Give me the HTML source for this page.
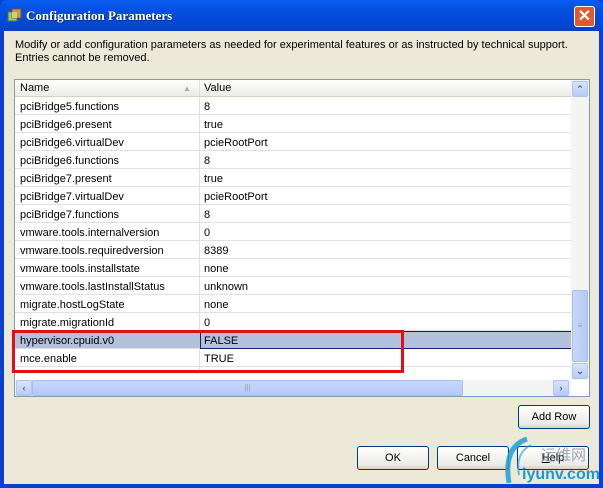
<!DOCTYPE html>
<html><head><meta charset="utf-8"><style>
*{margin:0;padding:0;box-sizing:border-box}
body{width:603px;height:488px;overflow:hidden;background:#0A3FD0;font-family:Tahoma,"Liberation Sans",sans-serif;font-size:11px;color:#000;position:relative}
.title{position:absolute;left:0;top:0;width:603px;height:31px;background:linear-gradient(#0A5EF0,#0550E0 30%,#0346D6 80%,#0A3FC0);border-radius:7px 7px 0 0}
.title .t{position:absolute;left:26px;top:8px;color:#fff;font-family:"Liberation Serif",serif;font-weight:bold;font-size:13px;text-shadow:1px 1px #0a2a80}
.ico{position:absolute;left:7px;top:8px;width:15px;height:15px}
.close{position:absolute;left:574px;top:6px;width:21px;height:21px;background:#E05A30;border:1px solid #fff;border-radius:3px;color:#fff;font-weight:bold;font-size:16px;text-align:center;line-height:19px;font-family:"Liberation Sans",sans-serif}
.body{position:absolute;left:4px;top:31px;width:595px;height:453px;background:#ECE9D8}
.desc{position:absolute;left:15px;top:39px;line-height:13px;width:580px}
.grid{position:absolute;left:14px;top:79px;width:576px;height:318px;border:1px solid #7F9DB9;background:#fff}
.hdr{position:absolute;left:0;top:0;width:556px;height:17px;background:linear-gradient(#fff,#ECEBE6);border-bottom:1px solid #D6D2C2}
.hdr div{position:absolute;top:2px}
.row{position:absolute;left:0;width:556px;height:18px;border-bottom:1px solid #E0DFE3}
.row span{position:absolute;top:4px}
.c1{left:5px}.c2{left:189px}
.sep{position:absolute;left:184px;top:0;width:1px;height:290px;background:#E0DFE3}
.vs{position:absolute;left:556px;top:0;width:18px;height:300px;background:#F4F4F0}
.btnsb{position:absolute;width:16px;height:16px;background:linear-gradient(#D8E4FB,#B8CCF4);border:1px solid #B0C4EE;border-radius:2px;color:#4D6185;font-size:9px;text-align:center;line-height:14px;font-weight:bold}
.hs{position:absolute;left:0;top:300px;width:556px;height:16px;background:#F4F4F0}
.btn{position:absolute;height:24px;border:1px solid #003C74;border-radius:3px;background:linear-gradient(#fff,#ECEBE6 80%,#D6D0C5);text-align:center;line-height:22px}
.red{position:absolute;left:12px;top:330px;width:392px;height:43px;border:3px solid #E0101A}
</style></head><body>
<div class="title">
<svg class="ico" viewBox="0 0 15 15"><rect x="1" y="4" width="9" height="9" fill="#9C6" stroke="#573" /><rect x="5" y="1" width="9" height="9" fill="#E9A030" stroke="#853" opacity=".9"/><rect x="5" y="4" width="5" height="6" fill="#CC8"/></svg>
<div class="t">Configuration Parameters</div>
<div class="close">✕</div>
</div>
<div class="body"></div>
<div class="desc">Modify or add configuration parameters as needed for experimental features or as instructed by technical support.<br>Entries cannot be removed.</div>
<div class="grid">
<div class="hdr"><div style="left:5px">Name</div><div style="left:168px;color:#aaa;font-size:8px;top:4px">▲</div><div style="left:184px;top:0;width:1px;height:17px;background:#ccc"></div><div style="left:189px">Value</div></div>
<div class="sep"></div>
<div class="row" style="top:17px"><span class="c1">pciBridge5.functions</span><span class="c2">8</span></div>
<div class="row" style="top:35px"><span class="c1">pciBridge6.present</span><span class="c2">true</span></div>
<div class="row" style="top:53px"><span class="c1">pciBridge6.virtualDev</span><span class="c2">pcieRootPort</span></div>
<div class="row" style="top:71px"><span class="c1">pciBridge6.functions</span><span class="c2">8</span></div>
<div class="row" style="top:89px"><span class="c1">pciBridge7.present</span><span class="c2">true</span></div>
<div class="row" style="top:107px"><span class="c1">pciBridge7.virtualDev</span><span class="c2">pcieRootPort</span></div>
<div class="row" style="top:125px"><span class="c1">pciBridge7.functions</span><span class="c2">8</span></div>
<div class="row" style="top:143px"><span class="c1">vmware.tools.internalversion</span><span class="c2">0</span></div>
<div class="row" style="top:161px"><span class="c1">vmware.tools.requiredversion</span><span class="c2">8389</span></div>
<div class="row" style="top:179px"><span class="c1">vmware.tools.installstate</span><span class="c2">none</span></div>
<div class="row" style="top:197px"><span class="c1">vmware.tools.lastInstallStatus</span><span class="c2">unknown</span></div>
<div class="row" style="top:215px"><span class="c1">migrate.hostLogState</span><span class="c2">none</span></div>
<div class="row" style="top:233px"><span class="c1">migrate.migrationId</span><span class="c2">0</span></div>
<div class="row" style="top:251px;background:#B3C1DD"><span class="c1">hypervisor.cpuid.v0</span><div style="position:absolute;left:185px;top:0;width:371px;height:18px;border:1px solid #0A246A;border-right:none"></div><span class="c2">FALSE</span></div>
<div class="row" style="top:269px"><span class="c1">mce.enable</span><span class="c2">TRUE</span></div>
<div class="vs">
<div class="btnsb" style="left:1px;top:1px">⌃</div>
<div style="position:absolute;left:1px;top:210px;width:16px;height:72px;background:linear-gradient(90deg,#C8D8FB,#B4CAF6);border:1px solid #A8BEEC;border-radius:2px;color:#8aa;text-align:center;line-height:70px;font-size:8px">≡</div>
<div class="btnsb" style="left:1px;top:283px">⌄</div>
</div>
<div class="hs">
<div class="btnsb" style="left:1px;top:0">‹</div>
<div style="position:absolute;left:17px;top:0;width:431px;height:16px;background:linear-gradient(#C8D8FB,#B4CAF6);border:1px solid #A8BEEC;border-radius:2px;color:#8aa;text-align:center;line-height:14px;font-size:8px">|||</div>
<div class="btnsb" style="left:538px;top:0">›</div>
</div>
</div>
<div class="red"></div>
<div class="btn" style="left:518px;top:405px;width:72px">Add Row</div>
<div class="btn" style="left:357px;top:446px;width:72px">OK</div>
<div class="btn" style="left:437px;top:446px;width:72px">Cancel</div>
<div class="btn" style="left:517px;top:446px;width:72px"><u>H</u>elp</div>
<svg style="position:absolute;left:495px;top:435px" width="108" height="53"><path d="M32 4 Q8 12 14 48" stroke="#1aa0d8" stroke-width="5" fill="none" opacity=".85"/><path d="M36 10 Q20 18 24 40" stroke="#1aa0d8" stroke-width="2" fill="none" opacity=".6"/></svg>
<div style="position:absolute;left:541px;top:444px;color:#7a8aa0;font-size:15px;font-family:'Noto Sans CJK SC',sans-serif;opacity:.75">运维网</div>
<div style="position:absolute;left:522px;top:466px;color:#1a9ad0;font-size:16px;font-weight:bold;font-family:'Liberation Sans',sans-serif">iyunv.com</div>
</body></html>
